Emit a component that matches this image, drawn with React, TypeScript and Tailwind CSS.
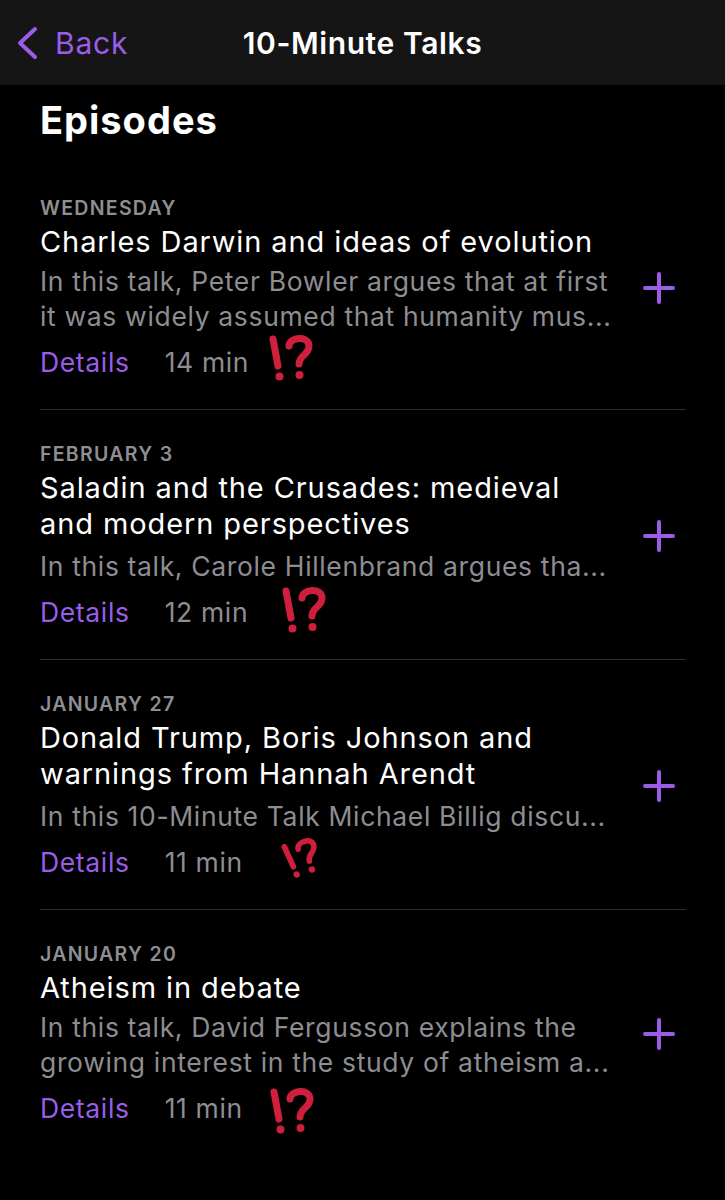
const episodes = [
  {
    date: "WEDNESDAY",
    title: ["Charles Darwin and ideas of evolution"],
    desc: [
      "In this talk, Peter Bowler argues that at first",
      "it was widely assumed that humanity mus...",
    ],
    length: "14 min",
    mark: "ml-[19px] mt-[-10px]",
  },
  {
    date: "FEBRUARY 3",
    title: ["Saladin and the Crusades: medieval", "and modern perspectives"],
    desc: ["In this talk, Carole Hillenbrand argues tha..."],
    length: "12 min",
    mark: "ml-[33px] mt-[-6px]",
  },
  {
    date: "JANUARY 27",
    title: ["Donald Trump, Boris Johnson and", "warnings from Hannah Arendt"],
    desc: ["In this 10-Minute Talk Michael Billig discu..."],
    length: "11 min",
    mark: "ml-[36px] mt-[-10px] scale-[0.8] -rotate-[14deg]",
  },
  {
    date: "JANUARY 20",
    title: ["Atheism in debate"],
    desc: [
      "In this talk, David Fergusson explains the",
      "growing interest in the study of atheism a...",
    ],
    length: "11 min",
    mark: "ml-[26px] mt-[4px]",
  },
];

const Interrobang = ({ className }: { className: string }) => (
  <svg
    width="46"
    height="48"
    viewBox="0 0 46 48"
    className={className}
    fill="none"
    stroke="#d01f3c"
    strokeLinecap="round"
    strokeLinejoin="round"
  >
    <path d="M5 5 L10 32" strokeWidth="7" />
    <circle cx="11.5" cy="42.5" r="4" fill="#d01f3c" stroke="none" />
    <path d="M21 12 C21 3 41 1 41 12 C41 21 31 21 31 30" strokeWidth="7" />
    <circle cx="31.5" cy="41" r="4" fill="#d01f3c" stroke="none" />
  </svg>
);

const PlusIcon = () => (
  <svg width="34" height="34" viewBox="0 0 34 34" stroke="#9b5de8" strokeWidth="4" strokeLinecap="round">
    <path d="M3 17 H31" />
    <path d="M17 3 V31" />
  </svg>
);

const App = () => {
  return (
    <div className="min-h-[1200px] bg-black text-white font-['Inter','Noto_Sans',sans-serif]">
      <header className="h-[85px] bg-[#151515] grid grid-cols-[1fr_auto_1fr] items-center px-[17px]">
        <div className="flex items-center gap-[17px] text-[#9b5de8]">
          <svg width="21" height="34" viewBox="0 0 21 34" fill="none" stroke="#9b5de8" strokeWidth="4" strokeLinecap="round" strokeLinejoin="round">
            <path d="M18 3 L3 17 L18 31" />
          </svg>
          <span className="text-[30px] leading-none tracking-[0.8px]">Back</span>
        </div>
        <h1 className="text-[30px] font-semibold leading-none tracking-[0.6px]">10-Minute Talks</h1>
        <div />
      </header>

      <main className="px-[40px] pr-[39px]">
        <h2 className="text-[38px] font-bold leading-none tracking-[1px] pt-[16px] pb-[25px]">Episodes</h2>

        {episodes.map((ep, i) => (
          <div
            key={ep.date}
            className={`flex items-center pt-[32px] pb-[29px] ${i < episodes.length - 1 ? "border-b border-[#2e2e30]" : ""}`}
          >
            <div className="flex-1 min-w-0">
              <div className="text-[19.5px] font-semibold leading-[24px] text-[#8e8e93] tracking-[1.3px]">{ep.date}</div>
              <div className="mt-[4px] text-[29px] leading-[36px] tracking-[0.9px] text-white">
                {ep.title.map((t) => (
                  <div key={t} className="whitespace-nowrap">{t}</div>
                ))}
              </div>
              <div
                className={`${ep.title.length > 1 ? "mt-[7px]" : "mt-[4px]"} text-[26.5px] leading-[35px] tracking-[0.65px] text-[#8d8d92]`}
              >
                {ep.desc.map((d) => (
                  <div key={d} className="whitespace-nowrap">{d}</div>
                ))}
              </div>
              <div className="mt-[11px] flex items-center h-[35px] text-[26.5px] tracking-[0.65px]">
                <span className="text-[#9b5de8]">Details</span>
                <span className="ml-[35px] text-[#8d8d92]">{ep.length}</span>
                <Interrobang className={ep.mark} />
              </div>
            </div>
            <div className="w-[60px] flex justify-end pr-[10px]">
              <PlusIcon />
            </div>
          </div>
        ))}
      </main>
    </div>
  );
};

export default App;
